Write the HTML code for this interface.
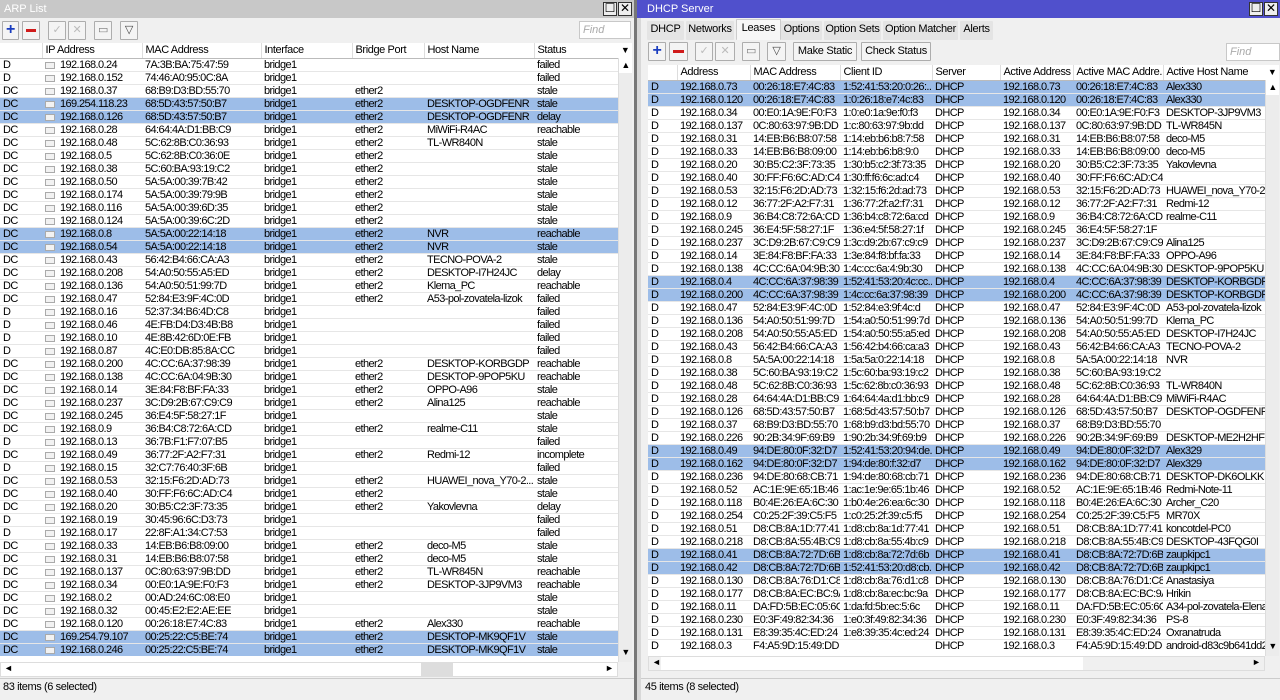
<!DOCTYPE html>
<html><head><meta charset="utf-8"><style>
*{box-sizing:border-box;margin:0;padding:0}
body{width:1280px;height:700px;overflow:hidden;background:#f0f0f0;font:11px "Liberation Sans",sans-serif;color:#000;position:relative;letter-spacing:-0.6px}
.abs{position:absolute}
.win{position:absolute;top:0;height:700px;background:#f0f0f0}
.title{position:absolute;left:0;right:0;top:0;height:18px;color:#fff;font-size:11px;padding:3px 4px;letter-spacing:0}
.wb{position:absolute;top:2px;width:14px;height:14px;border:1px solid #333;background:#eee;font-size:12px;line-height:11px;text-align:center;color:#000;letter-spacing:0}
.btn{position:absolute;height:19px;border:1px solid #adadad;background:#f4f4f4;border-radius:1px;text-align:center;font-size:11px;line-height:17px;letter-spacing:-0.3px}
.find{position:absolute;height:18px;background:#fff;border:1px solid #c8c8c8;color:#aaa;font-style:italic;padding:2px 3px;letter-spacing:0}
table{position:absolute;border-collapse:collapse;table-layout:fixed;background:#fff}
td{height:13px;padding:0 3px;white-space:nowrap;overflow:hidden;line-height:12px;border-bottom:1px solid #e6e6e6;font-size:11px}
th{height:15px;font-weight:normal;text-align:left;padding:0 3px;background:#fff;border-right:1px solid #ddd;border-bottom:1px solid #bbb;white-space:nowrap;overflow:hidden;letter-spacing:-0.4px}
tr.s td{background:#9dbde8}
i{display:inline-block;width:10px;height:7px;border:1px solid #aaa;background:#f2f2f2;margin-right:5px;vertical-align:-1px}
.vs{position:absolute;width:14px;background:#ececec;border-left:1px solid #ddd}
.hs{position:absolute;height:15px;background:#f0f0f0;border:1px solid #ddd}
.st{position:absolute;font-size:11px;letter-spacing:-0.4px}
</style></head><body>

<!-- LEFT WINDOW -->
<div class="win" style="left:0;width:634px">
<div class="title" style="background:#c8c8c8">ARP List</div>
<div class="wb" style="left:603px">☐</div><div class="wb" style="left:618px">✕</div>
<div class="btn" style="left:2px;top:21px;width:17px;color:#1a3dbf;font-weight:bold;font-size:16px;line-height:15px">+</div>
<div class="btn" style="left:22px;top:21px;width:18px"><div class="abs" style="left:3px;top:7px;width:10px;height:3px;background:#d01b1b"></div></div>
<div class="btn" style="left:48px;top:21px;width:18px;color:#bbb">✓</div>
<div class="btn" style="left:68px;top:21px;width:18px;color:#bbb">✕</div>
<div class="btn" style="left:94px;top:21px;width:18px;color:#777">▭</div>
<div class="btn" style="left:120px;top:21px;width:18px;color:#444">▽</div>
<div class="find" style="left:579px;top:21px;width:52px">Find</div>
<table style="left:0;top:43px;width:618px">
<colgroup><col style="width:42px"><col style="width:100px"><col style="width:119px"><col style="width:91px"><col style="width:72px"><col style="width:110px"><col style="width:84px"></colgroup>
<tr><th></th><th>IP Address</th><th>MAC Address</th><th>Interface</th><th>Bridge Port</th><th>Host Name</th><th>Status</th></tr>
<tr><td>D<td><i></i>192.168.0.24<td>7A:3B:BA:75:47:59<td>bridge1<td><td><td>failed
<tr><td>D<td><i></i>192.168.0.152<td>74:46:A0:95:0C:8A<td>bridge1<td><td><td>failed
<tr><td>DC<td><i></i>192.168.0.37<td>68:B9:D3:BD:55:70<td>bridge1<td>ether2<td><td>stale
<tr class="s"><td>DC<td><i></i>169.254.118.23<td>68:5D:43:57:50:B7<td>bridge1<td>ether2<td>DESKTOP-OGDFENR<td>stale
<tr class="s"><td>DC<td><i></i>192.168.0.126<td>68:5D:43:57:50:B7<td>bridge1<td>ether2<td>DESKTOP-OGDFENR<td>delay
<tr><td>DC<td><i></i>192.168.0.28<td>64:64:4A:D1:BB:C9<td>bridge1<td>ether2<td>MiWiFi-R4AC<td>reachable
<tr><td>DC<td><i></i>192.168.0.48<td>5C:62:8B:C0:36:93<td>bridge1<td>ether2<td>TL-WR840N<td>stale
<tr><td>DC<td><i></i>192.168.0.5<td>5C:62:8B:C0:36:0E<td>bridge1<td>ether2<td><td>stale
<tr><td>DC<td><i></i>192.168.0.38<td>5C:60:BA:93:19:C2<td>bridge1<td>ether2<td><td>stale
<tr><td>DC<td><i></i>192.168.0.50<td>5A:5A:00:39:7B:42<td>bridge1<td>ether2<td><td>stale
<tr><td>DC<td><i></i>192.168.0.174<td>5A:5A:00:39:79:9B<td>bridge1<td>ether2<td><td>stale
<tr><td>DC<td><i></i>192.168.0.116<td>5A:5A:00:39:6D:35<td>bridge1<td>ether2<td><td>stale
<tr><td>DC<td><i></i>192.168.0.124<td>5A:5A:00:39:6C:2D<td>bridge1<td>ether2<td><td>stale
<tr class="s"><td>DC<td><i></i>192.168.0.8<td>5A:5A:00:22:14:18<td>bridge1<td>ether2<td>NVR<td>reachable
<tr class="s"><td>DC<td><i></i>192.168.0.54<td>5A:5A:00:22:14:18<td>bridge1<td>ether2<td>NVR<td>stale
<tr><td>DC<td><i></i>192.168.0.43<td>56:42:B4:66:CA:A3<td>bridge1<td>ether2<td>TECNO-POVA-2<td>stale
<tr><td>DC<td><i></i>192.168.0.208<td>54:A0:50:55:A5:ED<td>bridge1<td>ether2<td>DESKTOP-I7H24JC<td>delay
<tr><td>DC<td><i></i>192.168.0.136<td>54:A0:50:51:99:7D<td>bridge1<td>ether2<td>Klema_PC<td>reachable
<tr><td>DC<td><i></i>192.168.0.47<td>52:84:E3:9F:4C:0D<td>bridge1<td>ether2<td>A53-pol-zovatela-lizok<td>failed
<tr><td>D<td><i></i>192.168.0.16<td>52:37:34:B6:4D:C8<td>bridge1<td><td><td>failed
<tr><td>D<td><i></i>192.168.0.46<td>4E:FB:D4:D3:4B:B8<td>bridge1<td><td><td>failed
<tr><td>D<td><i></i>192.168.0.10<td>4E:8B:42:6D:0E:FB<td>bridge1<td><td><td>failed
<tr><td>D<td><i></i>192.168.0.87<td>4C:E0:DB:85:8A:CC<td>bridge1<td><td><td>failed
<tr><td>DC<td><i></i>192.168.0.200<td>4C:CC:6A:37:98:39<td>bridge1<td>ether2<td>DESKTOP-KORBGDP<td>reachable
<tr><td>DC<td><i></i>192.168.0.138<td>4C:CC:6A:04:9B:30<td>bridge1<td>ether2<td>DESKTOP-9POP5KU<td>reachable
<tr><td>DC<td><i></i>192.168.0.14<td>3E:84:F8:BF:FA:33<td>bridge1<td>ether2<td>OPPO-A96<td>stale
<tr><td>DC<td><i></i>192.168.0.237<td>3C:D9:2B:67:C9:C9<td>bridge1<td>ether2<td>Alina125<td>reachable
<tr><td>DC<td><i></i>192.168.0.245<td>36:E4:5F:58:27:1F<td>bridge1<td><td><td>stale
<tr><td>DC<td><i></i>192.168.0.9<td>36:B4:C8:72:6A:CD<td>bridge1<td>ether2<td>realme-C11<td>stale
<tr><td>D<td><i></i>192.168.0.13<td>36:7B:F1:F7:07:B5<td>bridge1<td><td><td>failed
<tr><td>DC<td><i></i>192.168.0.49<td>36:77:2F:A2:F7:31<td>bridge1<td>ether2<td>Redmi-12<td>incomplete
<tr><td>D<td><i></i>192.168.0.15<td>32:C7:76:40:3F:6B<td>bridge1<td><td><td>failed
<tr><td>DC<td><i></i>192.168.0.53<td>32:15:F6:2D:AD:73<td>bridge1<td>ether2<td>HUAWEI_nova_Y70-2...<td>stale
<tr><td>DC<td><i></i>192.168.0.40<td>30:FF:F6:6C:AD:C4<td>bridge1<td>ether2<td><td>stale
<tr><td>DC<td><i></i>192.168.0.20<td>30:B5:C2:3F:73:35<td>bridge1<td>ether2<td>Yakovlevna<td>delay
<tr><td>D<td><i></i>192.168.0.19<td>30:45:96:6C:D3:73<td>bridge1<td><td><td>failed
<tr><td>D<td><i></i>192.168.0.17<td>22:8F:A1:34:C7:53<td>bridge1<td><td><td>failed
<tr><td>DC<td><i></i>192.168.0.33<td>14:EB:B6:B8:09:00<td>bridge1<td>ether2<td>deco-M5<td>stale
<tr><td>DC<td><i></i>192.168.0.31<td>14:EB:B6:B8:07:58<td>bridge1<td>ether2<td>deco-M5<td>stale
<tr><td>DC<td><i></i>192.168.0.137<td>0C:80:63:97:9B:DD<td>bridge1<td>ether2<td>TL-WR845N<td>reachable
<tr><td>DC<td><i></i>192.168.0.34<td>00:E0:1A:9E:F0:F3<td>bridge1<td>ether2<td>DESKTOP-3JP9VM3<td>reachable
<tr><td>DC<td><i></i>192.168.0.2<td>00:AD:24:6C:08:E0<td>bridge1<td><td><td>stale
<tr><td>DC<td><i></i>192.168.0.32<td>00:45:E2:E2:AE:EE<td>bridge1<td><td><td>stale
<tr><td>DC<td><i></i>192.168.0.120<td>00:26:18:E7:4C:83<td>bridge1<td>ether2<td>Alex330<td>reachable
<tr class="s"><td>DC<td><i></i>169.254.79.107<td>00:25:22:C5:BE:74<td>bridge1<td>ether2<td>DESKTOP-MK9QF1V<td>stale
<tr class="s"><td>DC<td><i></i>192.168.0.246<td>00:25:22:C5:BE:74<td>bridge1<td>ether2<td>DESKTOP-MK9QF1V<td>stale
</table>
<div class="abs" style="left:0;top:656px;width:618px;height:6px;background:#fff;overflow:hidden"></div>
<div class="abs" style="left:618px;top:43px;width:14px;height:15px;background:#fff;text-align:center;font-size:9px;line-height:15px">▼</div>
<div class="vs" style="left:618px;top:58px;height:604px"><div class="abs" style="left:0;top:0;width:13px;height:15px;background:#fff;text-align:center;font-size:9px;line-height:15px">▲</div><div class="abs" style="left:0;top:587px;width:13px;height:15px;text-align:center;font-size:9px;line-height:15px">▼</div></div>
<div class="hs" style="left:0;top:662px;width:618px;background:#fff"><span class="abs" style="left:3px;top:0;font-size:9px">◄</span><div class="abs" style="left:420px;top:0;width:32px;height:13px;background:#ddd"></div><span class="abs" style="left:604px;top:0;font-size:9px">►</span></div>
<div class="abs" style="left:0;top:678px;width:634px;height:1px;background:#ccc"></div>
<div class="st" style="left:3px;top:681px">83 items (6 selected)</div>
</div>
<div class="abs" style="left:634px;top:0;width:3px;height:700px;background:#777"></div>

<!-- RIGHT WINDOW -->
<div class="win" style="left:637px;width:643px">
<div class="title" style="background:#5050cc;padding-left:10px">DHCP Server</div>
<div class="wb" style="left:612px">☐</div><div class="wb" style="left:627px">✕</div>
<div class="abs" style="left:0;top:18px;width:4px;height:682px;background:#d8d8d8"></div>
<div class="btn" style="left:10px;top:21px;width:37px;border:none;background:#e4e4e4">DHCP</div>
<div class="btn" style="left:49px;top:21px;width:48px;border:none;background:#e4e4e4">Networks</div>
<div class="btn" style="left:99px;top:19px;width:45px;border:1px solid #ccc;border-bottom:none;background:#f7f7f7;height:21px">Leases</div>
<div class="btn" style="left:144px;top:21px;width:41px;border:none;background:#e4e4e4">Options</div>
<div class="btn" style="left:187px;top:21px;width:57px;border:none;background:#e4e4e4">Option Sets</div>
<div class="btn" style="left:246px;top:21px;width:75px;border:none;background:#e4e4e4">Option Matcher</div>
<div class="btn" style="left:323px;top:21px;width:33px;border:none;background:#e4e4e4">Alerts</div>
<div class="btn" style="left:11px;top:42px;width:18px;color:#1a3dbf;font-weight:bold;font-size:16px;line-height:15px">+</div>
<div class="btn" style="left:32px;top:42px;width:19px"><div class="abs" style="left:3px;top:7px;width:11px;height:3px;background:#d01b1b"></div></div>
<div class="btn" style="left:58px;top:42px;width:18px;color:#bbb">✓</div>
<div class="btn" style="left:78px;top:42px;width:20px;color:#bbb">✕</div>
<div class="btn" style="left:105px;top:42px;width:18px;color:#777">▭</div>
<div class="btn" style="left:130px;top:42px;width:19px;color:#444">▽</div>
<div class="btn" style="left:156px;top:42px;width:64px">Make Static</div>
<div class="btn" style="left:224px;top:42px;width:70px">Check Status</div>
<div class="find" style="left:589px;top:43px;width:54px">Find</div>
<table style="left:11px;top:65px;width:617px">
<colgroup><col style="width:29px"><col style="width:73px"><col style="width:90px"><col style="width:92px"><col style="width:68px"><col style="width:73px"><col style="width:90px"><col style="width:102px"></colgroup>
<tr><th></th><th>Address</th><th>MAC Address</th><th>Client ID</th><th>Server</th><th>Active Address</th><th>Active MAC Addre...</th><th>Active Host Name</th></tr>
<tr class="s"><td>D<td>192.168.0.73<td>00:26:18:E7:4C:83<td>1:52:41:53:20:0:26:...<td>DHCP<td>192.168.0.73<td>00:26:18:E7:4C:83<td>Alex330
<tr class="s"><td>D<td>192.168.0.120<td>00:26:18:E7:4C:83<td>1:0:26:18:e7:4c:83<td>DHCP<td>192.168.0.120<td>00:26:18:E7:4C:83<td>Alex330
<tr><td>D<td>192.168.0.34<td>00:E0:1A:9E:F0:F3<td>1:0:e0:1a:9e:f0:f3<td>DHCP<td>192.168.0.34<td>00:E0:1A:9E:F0:F3<td>DESKTOP-3JP9VM3
<tr><td>D<td>192.168.0.137<td>0C:80:63:97:9B:DD<td>1:c:80:63:97:9b:dd<td>DHCP<td>192.168.0.137<td>0C:80:63:97:9B:DD<td>TL-WR845N
<tr><td>D<td>192.168.0.31<td>14:EB:B6:B8:07:58<td>1:14:eb:b6:b8:7:58<td>DHCP<td>192.168.0.31<td>14:EB:B6:B8:07:58<td>deco-M5
<tr><td>D<td>192.168.0.33<td>14:EB:B6:B8:09:00<td>1:14:eb:b6:b8:9:0<td>DHCP<td>192.168.0.33<td>14:EB:B6:B8:09:00<td>deco-M5
<tr><td>D<td>192.168.0.20<td>30:B5:C2:3F:73:35<td>1:30:b5:c2:3f:73:35<td>DHCP<td>192.168.0.20<td>30:B5:C2:3F:73:35<td>Yakovlevna
<tr><td>D<td>192.168.0.40<td>30:FF:F6:6C:AD:C4<td>1:30:ff:f6:6c:ad:c4<td>DHCP<td>192.168.0.40<td>30:FF:F6:6C:AD:C4<td>
<tr><td>D<td>192.168.0.53<td>32:15:F6:2D:AD:73<td>1:32:15:f6:2d:ad:73<td>DHCP<td>192.168.0.53<td>32:15:F6:2D:AD:73<td>HUAWEI_nova_Y70-2e
<tr><td>D<td>192.168.0.12<td>36:77:2F:A2:F7:31<td>1:36:77:2f:a2:f7:31<td>DHCP<td>192.168.0.12<td>36:77:2F:A2:F7:31<td>Redmi-12
<tr><td>D<td>192.168.0.9<td>36:B4:C8:72:6A:CD<td>1:36:b4:c8:72:6a:cd<td>DHCP<td>192.168.0.9<td>36:B4:C8:72:6A:CD<td>realme-C11
<tr><td>D<td>192.168.0.245<td>36:E4:5F:58:27:1F<td>1:36:e4:5f:58:27:1f<td>DHCP<td>192.168.0.245<td>36:E4:5F:58:27:1F<td>
<tr><td>D<td>192.168.0.237<td>3C:D9:2B:67:C9:C9<td>1:3c:d9:2b:67:c9:c9<td>DHCP<td>192.168.0.237<td>3C:D9:2B:67:C9:C9<td>Alina125
<tr><td>D<td>192.168.0.14<td>3E:84:F8:BF:FA:33<td>1:3e:84:f8:bf:fa:33<td>DHCP<td>192.168.0.14<td>3E:84:F8:BF:FA:33<td>OPPO-A96
<tr><td>D<td>192.168.0.138<td>4C:CC:6A:04:9B:30<td>1:4c:cc:6a:4:9b:30<td>DHCP<td>192.168.0.138<td>4C:CC:6A:04:9B:30<td>DESKTOP-9POP5KU
<tr class="s"><td>D<td>192.168.0.4<td>4C:CC:6A:37:98:39<td>1:52:41:53:20:4c:cc...<td>DHCP<td>192.168.0.4<td>4C:CC:6A:37:98:39<td>DESKTOP-KORBGDP
<tr class="s"><td>D<td>192.168.0.200<td>4C:CC:6A:37:98:39<td>1:4c:cc:6a:37:98:39<td>DHCP<td>192.168.0.200<td>4C:CC:6A:37:98:39<td>DESKTOP-KORBGDP
<tr><td>D<td>192.168.0.47<td>52:84:E3:9F:4C:0D<td>1:52:84:e3:9f:4c:d<td>DHCP<td>192.168.0.47<td>52:84:E3:9F:4C:0D<td>A53-pol-zovatela-lizok
<tr><td>D<td>192.168.0.136<td>54:A0:50:51:99:7D<td>1:54:a0:50:51:99:7d<td>DHCP<td>192.168.0.136<td>54:A0:50:51:99:7D<td>Klema_PC
<tr><td>D<td>192.168.0.208<td>54:A0:50:55:A5:ED<td>1:54:a0:50:55:a5:ed<td>DHCP<td>192.168.0.208<td>54:A0:50:55:A5:ED<td>DESKTOP-I7H24JC
<tr><td>D<td>192.168.0.43<td>56:42:B4:66:CA:A3<td>1:56:42:b4:66:ca:a3<td>DHCP<td>192.168.0.43<td>56:42:B4:66:CA:A3<td>TECNO-POVA-2
<tr><td>D<td>192.168.0.8<td>5A:5A:00:22:14:18<td>1:5a:5a:0:22:14:18<td>DHCP<td>192.168.0.8<td>5A:5A:00:22:14:18<td>NVR
<tr><td>D<td>192.168.0.38<td>5C:60:BA:93:19:C2<td>1:5c:60:ba:93:19:c2<td>DHCP<td>192.168.0.38<td>5C:60:BA:93:19:C2<td>
<tr><td>D<td>192.168.0.48<td>5C:62:8B:C0:36:93<td>1:5c:62:8b:c0:36:93<td>DHCP<td>192.168.0.48<td>5C:62:8B:C0:36:93<td>TL-WR840N
<tr><td>D<td>192.168.0.28<td>64:64:4A:D1:BB:C9<td>1:64:64:4a:d1:bb:c9<td>DHCP<td>192.168.0.28<td>64:64:4A:D1:BB:C9<td>MiWiFi-R4AC
<tr><td>D<td>192.168.0.126<td>68:5D:43:57:50:B7<td>1:68:5d:43:57:50:b7<td>DHCP<td>192.168.0.126<td>68:5D:43:57:50:B7<td>DESKTOP-OGDFENR
<tr><td>D<td>192.168.0.37<td>68:B9:D3:BD:55:70<td>1:68:b9:d3:bd:55:70<td>DHCP<td>192.168.0.37<td>68:B9:D3:BD:55:70<td>
<tr><td>D<td>192.168.0.226<td>90:2B:34:9F:69:B9<td>1:90:2b:34:9f:69:b9<td>DHCP<td>192.168.0.226<td>90:2B:34:9F:69:B9<td>DESKTOP-ME2H2HF
<tr class="s"><td>D<td>192.168.0.49<td>94:DE:80:0F:32:D7<td>1:52:41:53:20:94:de...<td>DHCP<td>192.168.0.49<td>94:DE:80:0F:32:D7<td>Alex329
<tr class="s"><td>D<td>192.168.0.162<td>94:DE:80:0F:32:D7<td>1:94:de:80:f:32:d7<td>DHCP<td>192.168.0.162<td>94:DE:80:0F:32:D7<td>Alex329
<tr><td>D<td>192.168.0.236<td>94:DE:80:68:CB:71<td>1:94:de:80:68:cb:71<td>DHCP<td>192.168.0.236<td>94:DE:80:68:CB:71<td>DESKTOP-DK6OLKK
<tr><td>D<td>192.168.0.52<td>AC:1E:9E:65:1B:46<td>1:ac:1e:9e:65:1b:46<td>DHCP<td>192.168.0.52<td>AC:1E:9E:65:1B:46<td>Redmi-Note-11
<tr><td>D<td>192.168.0.118<td>B0:4E:26:EA:6C:30<td>1:b0:4e:26:ea:6c:30<td>DHCP<td>192.168.0.118<td>B0:4E:26:EA:6C:30<td>Archer_C20
<tr><td>D<td>192.168.0.254<td>C0:25:2F:39:C5:F5<td>1:c0:25:2f:39:c5:f5<td>DHCP<td>192.168.0.254<td>C0:25:2F:39:C5:F5<td>MR70X
<tr><td>D<td>192.168.0.51<td>D8:CB:8A:1D:77:41<td>1:d8:cb:8a:1d:77:41<td>DHCP<td>192.168.0.51<td>D8:CB:8A:1D:77:41<td>koncotdel-PC0
<tr><td>D<td>192.168.0.218<td>D8:CB:8A:55:4B:C9<td>1:d8:cb:8a:55:4b:c9<td>DHCP<td>192.168.0.218<td>D8:CB:8A:55:4B:C9<td>DESKTOP-43FQG0I
<tr class="s"><td>D<td>192.168.0.41<td>D8:CB:8A:72:7D:6B<td>1:d8:cb:8a:72:7d:6b<td>DHCP<td>192.168.0.41<td>D8:CB:8A:72:7D:6B<td>zaupkipc1
<tr class="s"><td>D<td>192.168.0.42<td>D8:CB:8A:72:7D:6B<td>1:52:41:53:20:d8:cb...<td>DHCP<td>192.168.0.42<td>D8:CB:8A:72:7D:6B<td>zaupkipc1
<tr><td>D<td>192.168.0.130<td>D8:CB:8A:76:D1:C8<td>1:d8:cb:8a:76:d1:c8<td>DHCP<td>192.168.0.130<td>D8:CB:8A:76:D1:C8<td>Anastasiya
<tr><td>D<td>192.168.0.177<td>D8:CB:8A:EC:BC:9A<td>1:d8:cb:8a:ec:bc:9a<td>DHCP<td>192.168.0.177<td>D8:CB:8A:EC:BC:9A<td>Hrikin
<tr><td>D<td>192.168.0.11<td>DA:FD:5B:EC:05:6C<td>1:da:fd:5b:ec:5:6c<td>DHCP<td>192.168.0.11<td>DA:FD:5B:EC:05:6C<td>A34-pol-zovatela-Elena
<tr><td>D<td>192.168.0.230<td>E0:3F:49:82:34:36<td>1:e0:3f:49:82:34:36<td>DHCP<td>192.168.0.230<td>E0:3F:49:82:34:36<td>PS-8
<tr><td>D<td>192.168.0.131<td>E8:39:35:4C:ED:24<td>1:e8:39:35:4c:ed:24<td>DHCP<td>192.168.0.131<td>E8:39:35:4C:ED:24<td>Oxranatruda
<tr><td>D<td>192.168.0.3<td>F4:A5:9D:15:49:DD<td><td>DHCP<td>192.168.0.3<td>F4:A5:9D:15:49:DD<td>android-d83c9b641dd2
</table>
<div class="abs" style="left:11px;top:652px;width:617px;height:4px;background:#fff"></div>
<div class="abs" style="left:628px;top:65px;width:14px;height:15px;background:#fff;text-align:center;font-size:9px;line-height:15px">▼</div>
<div class="vs" style="left:628px;top:80px;height:576px"><div class="abs" style="left:0;top:0;width:13px;height:15px;background:#fff;text-align:center;font-size:9px;line-height:15px">▲</div><div class="abs" style="left:0;top:559px;width:13px;height:15px;text-align:center;font-size:9px;line-height:15px">▼</div></div>
<div class="hs" style="left:11px;top:656px;width:617px"><span class="abs" style="left:3px;top:0;font-size:9px">◄</span><div class="abs" style="left:12px;top:0;width:422px;height:13px;background:#fff"></div><span class="abs" style="left:603px;top:0;font-size:9px">►</span></div>
<div class="abs" style="left:4px;top:678px;width:639px;height:1px;background:#ccc"></div>
<div class="st" style="left:8px;top:681px">45 items (8 selected)</div>
</div>
</body></html>
